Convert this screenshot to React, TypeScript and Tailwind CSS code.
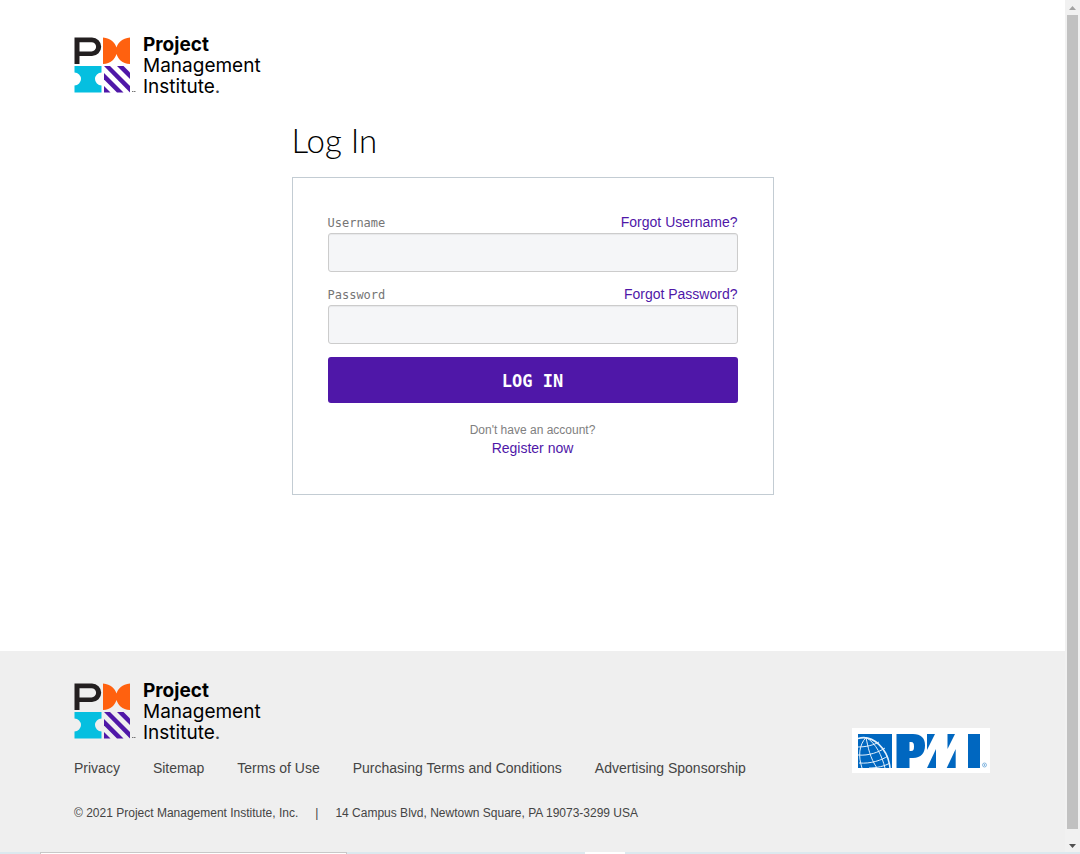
function PmiMark() {
  return (
    <svg viewBox="0 0 62 57" className="h-[57px] w-[62px] shrink-0" aria-hidden="true">
      <path fillRule="evenodd" fill="#231f20" d="M.5 .5H18a9.200 9.200 0 0 1 0 18.400H5.500V27H.5ZM5.500 5.200V14.400H17.500a4.600 4.600 0 0 0 0-9.200Z" />
      <path fill="#ff610f" d="M29 .5C37 1 41 6 42.500 10.500C44 6 48 1 56 .5V27C48 26.500 44 22 42.500 17C41 22 37 26.500 29 27Z" />
      <path fill="#05bfe0" d="M.5 29H27.500V35.500a6.500 6.500 0 0 0 0 13V55.500H.5V48.500a6.500 6.500 0 0 0 0-13Z" />
      <g fill="#4f17a8">
        <path d="M30 29H36L56 49V55.500Z" />
        <path d="M43 29H49.500L56 35.500V42Z" />
        <path d="M30 36L49.500 55.500H43L30 42.500Z" />
        <path d="M30 49L36.500 55.500H30Z" />
      </g>
      <path stroke="#777" strokeWidth="1" d="M58 54.500h1.500M60 54.500h1.500" />
    </svg>
  );
}

function Logo() {
  return (
    <a href="#home" className="flex w-fit items-start gap-[7px] font-[Inter,sans-serif] text-[19px] leading-[21px] text-black">
      <PmiMark />
      <span className="-mt-[3px] block">
        <span className="block font-bold">Project</span>
        <span className="block">Management</span>
        <span className="block">
          Institute<span className="text-[#444]">.</span>
        </span>
      </span>
    </a>
  );
}

function ClassicPmiLogo() {
  return (
    <svg viewBox="0 0 138 45" className="mb-[5px] h-[45px] w-[138px]" role="img" aria-label="PMI">
      <rect width="138" height="45" fill="#fff" />
      <g fill="#0067c0">
        <path d="M6 6H40V40H6Z" />
        <path fillRule="evenodd" d="M44.500 6H61C69 6 73 10 73 17.500S69 30 61 30H57.500V40H44.500ZM57.500 14V23H59C61.500 23 62 21.500 62 18.500S61.500 14 59 14Z" />
        <path d="M75 6H83L75 22Z" />
        <path d="M84 21V40H75Z" />
        <path d="M95.500 6H103L95.500 21Z" />
        <path d="M103.700 21V40H94.700Z" />
        <path d="M116 6H128V40H116Z" />
      </g>
      <g fill="none" stroke="#e4f1fc" strokeWidth="1">
        <path d="M6 10.500C21 6 36 21 38 40" strokeWidth="1.600" />
        <path d="M14 9.500C7 17 6 28 10 40M14 9.500C16 19 18 30 25 40M14 9.500C24 15 30 28 33 40M6 19C14 19 22 17 27 14M6 27C17 28 27 24 33 20M7 35C19 36 30 32 36 28M17 40C25 40 33 38 38 35" />
      </g>
      <circle cx="132.500" cy="37" r="2" fill="none" stroke="#4590cf" strokeWidth=".6" />
      <circle cx="132.500" cy="37" r=".7" fill="#4590cf" />
    </svg>
  );
}

function Field({ id, label, type, link }: { id: string; label: string; type: string; link: string }) {
  return (
    <div>
      <div className="flex h-5 items-start justify-between">
        <label htmlFor={id} className="font-['DejaVu_Sans_Mono',monospace] text-[12px] leading-5 text-[#757575]">
          {label}
        </label>
        <a href={`#forgot-${id}`} className="text-[14px] leading-[18px] text-[#4f17a8]">
          {link}
        </a>
      </div>
      <input
        id={id}
        type={type}
        className="block h-[39px] w-full rounded-[3px] border border-[#ccc] bg-[#f5f6f8] px-3 text-[14px] shadow-[inset_0_1px_1px_rgba(0,0,0,0.06)]"
      />
    </div>
  );
}

const footerLinks = ["Privacy", "Sitemap", "Terms of Use", "Purchasing Terms and Conditions", "Advertising Sponsorship"];

function ScrollRail() {
  return (
    <div className="flex w-[15px] shrink-0 flex-col items-center bg-[#f1f1f1]" aria-hidden="true">
      <svg viewBox="0 0 15 15" className="size-[15px]">
        <path d="M4 10L7.500 6L11 10Z" fill="#a3a3a3" />
      </svg>
      <div className="w-[11px] flex-1 bg-[#c1c1c1]" />
      <svg viewBox="0 0 15 23" className="h-[23px] w-[15px]">
        <path d="M4 15L7.500 19L11 15Z" fill="#505050" />
      </svg>
    </div>
  );
}

export default function App() {
  return (
    <div className="flex min-h-screen flex-col bg-white font-['Liberation_Sans',Arial,sans-serif]">
      <div className="flex flex-1">
        <div className="flex min-w-0 flex-1 flex-col">
          <header className="px-[74px] pt-[37px]">
            <Logo />
          </header>
          <main className="mx-auto w-full max-w-[482px] flex-1 pt-[23px] pb-10">
            <h1 className="font-[Lato,sans-serif] text-[33px] leading-10 font-light text-black">Log In</h1>
            <form
              className="mt-[17px] border border-[#c3ccd3] px-[35px] pt-[35px] pb-[37px]"
              onSubmit={(event) => event.preventDefault()}
            >
              <div className="flex flex-col gap-[13px]">
                <Field id="username" label="Username" type="text" link="Forgot Username?" />
                <Field id="password" label="Password" type="password" link="Forgot Password?" />
                <button
                  type="submit"
                  className="h-[46px] rounded-[3px] bg-[#4f17a8] pt-[3px] font-['DejaVu_Sans_Mono',monospace] text-[17px] font-bold text-white"
                >
                  LOG IN
                </button>
              </div>
              <div className="mt-[18px] text-center leading-[18px]">
                <p className="text-[12px] leading-[18px] text-[#808080]">Don't have an account?</p>
                <a href="#register" className="text-[14px] text-[#4f17a8]">
                  Register now
                </a>
              </div>
            </form>
          </main>
          <footer className="flex items-center justify-between bg-[#efefef] pr-[75px] pl-[74px] pt-8 pb-[29px] text-[#444]">
            <div>
              <Logo />
              <nav className="mt-[15px] flex gap-[33px] text-[14px] leading-5">
                {footerLinks.map((text) => (
                  <a key={text} href="#footer" className="whitespace-nowrap">
                    {text}
                  </a>
                ))}
              </nav>
              <p className="mt-[25px] flex gap-[17px] text-[12px] leading-5">
                <span>© 2021 Project Management Institute, Inc.</span>
                <span>|</span>
                <span>14 Campus Blvd, Newtown Square, PA 19073-3299 USA</span>
              </p>
            </div>
            <ClassicPmiLogo />
          </footer>
        </div>
        <ScrollRail />
      </div>
      <div className="flex h-0.5 bg-[#dce9ef] pl-10" aria-hidden="true">
        <div className="w-[307px] border border-b-0 border-[#c8c8c8] bg-white" />
        <div className="ml-[238px] w-10 bg-white" />
      </div>
    </div>
  );
}
